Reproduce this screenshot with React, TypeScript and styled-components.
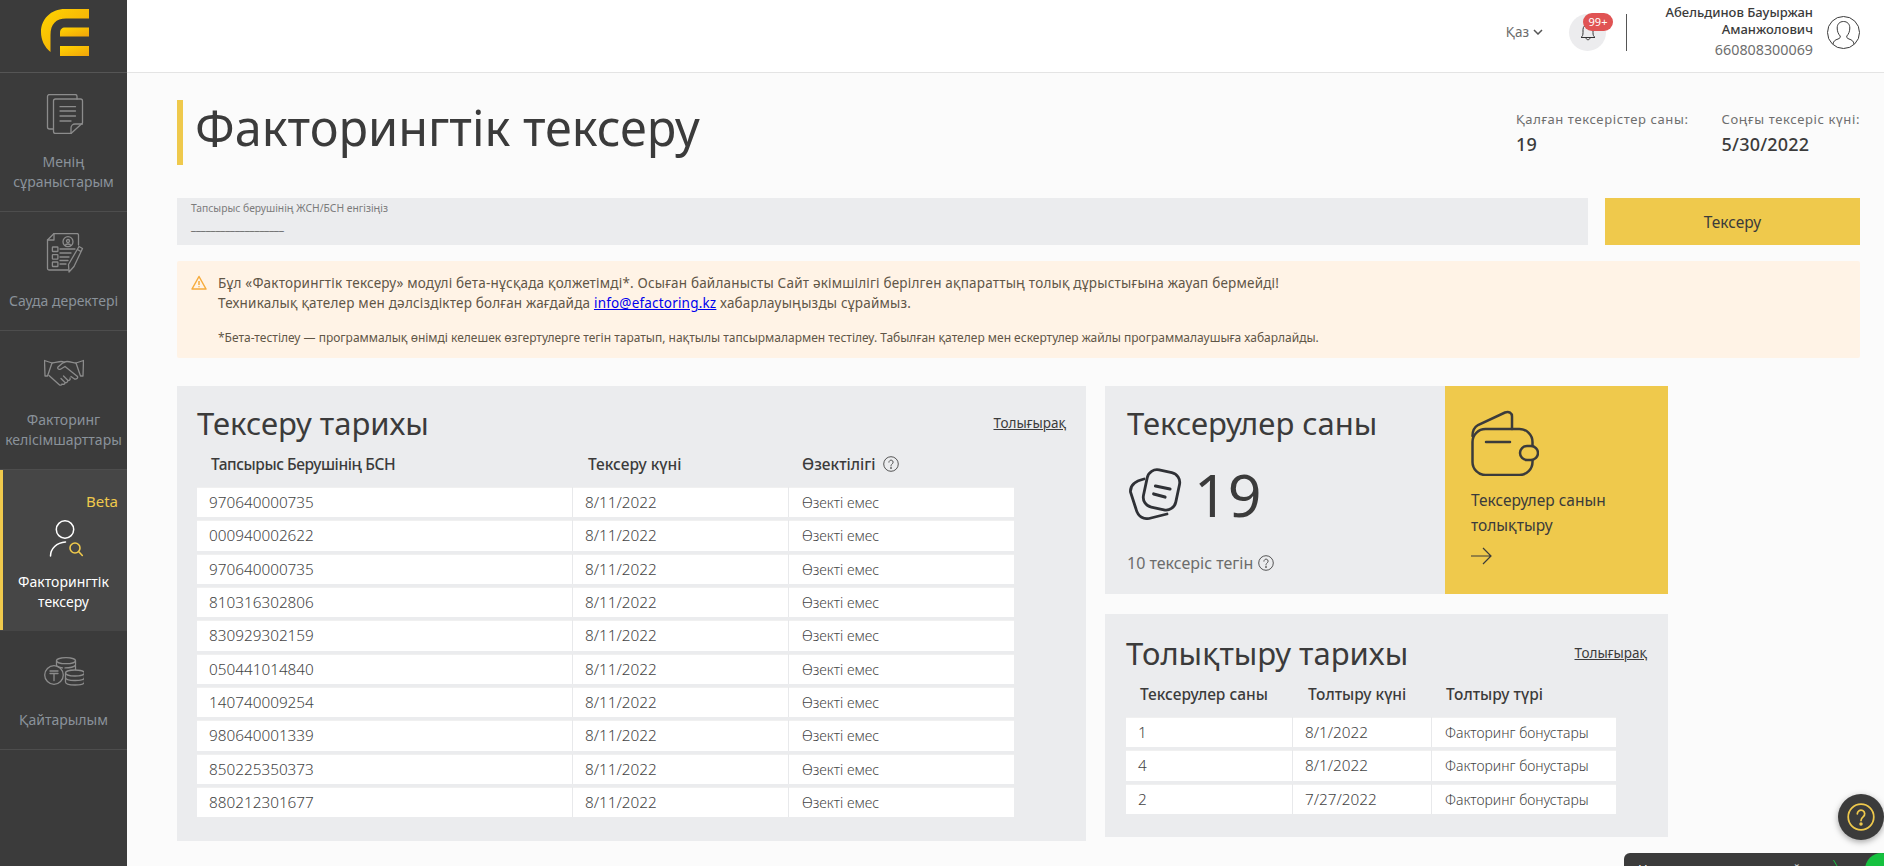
import React from "react";
import styled, { createGlobalStyle } from "styled-components";

const Global = createGlobalStyle`
  html, body {
    margin: 0;
    padding: 0;
    height: 100%;
    overflow: hidden;
    background: #fbfbfb;
  }
  * { box-sizing: border-box; }
`;

const yellow = "#efc94c";
const dark = "#3b3b3b";
const panel = "#ebecee";

const Shell = styled.div`
  display: flex;
  width: 1884px;
  height: 866px;
  overflow: hidden;
  font-family: "Noto Sans", "Open Sans", sans-serif;
  color: ${dark};
  background: #fbfbfb;
`;

const Sidebar = styled.nav`
  flex: 0 0 127px;
  background: ${dark};
  display: flex;
  flex-direction: column;
`;

const LogoBox = styled.div`
  height: 73px;
  display: flex;
  padding: 9px 0 0 41px;
  border-bottom: 1px solid #555;
`;

const NavItem = styled.a<{ $active?: boolean }>`
  position: relative;
  display: flex;
  flex-direction: column;
  align-items: center;
  padding: ${({ $active }) => ($active ? "48px 0 18px" : "21px 0 19px")};
  border-bottom: 1px solid ${({ $active }) => ($active ? "transparent" : "#4d4d4d")};
  background: ${({ $active }) => ($active ? "#464646" : "transparent")};
  box-shadow: ${({ $active }) => ($active ? `inset 3px 0 0 ${yellow}` : "none")};
  color: ${({ $active }) => ($active ? "#fff" : "#8a929a")};
  font-size: 14px;
  line-height: 20px;
  text-align: center;
`;

const NavIcon = styled.svg<{ $active?: boolean }>`
  width: 40px;
  height: 40px;
  margin-bottom: ${({ $active }) => ($active ? "14px" : "18px")};
  fill: none;
  stroke: #8c8c8c;
  stroke-width: 1.3;
  stroke-linecap: round;
  stroke-linejoin: round;
`;

const Beta = styled.span`
  position: absolute;
  top: 21px;
  right: 9px;
  color: ${yellow};
  font-size: 15px;
  line-height: 20px;
`;

const Main = styled.div`
  flex: 1;
  display: flex;
  flex-direction: column;
  min-width: 0;
`;

const TopBar = styled.header`
  height: 73px;
  background: #fff;
  border-bottom: 1px solid #e4e4e4;
  display: flex;
  align-items: center;
  justify-content: flex-end;
  padding: 0 24px 8px 0;
`;

const Lang = styled.div`
  display: flex;
  align-items: center;
  gap: 4px;
  font-size: 13.5px;
  color: #6c6c6c;
  margin-right: 26px;
`;

const Bell = styled.div`
  position: relative;
  width: 37px;
  height: 37px;
  border-radius: 50%;
  background: #ececee;
  display: flex;
  align-items: center;
  justify-content: center;
  margin-right: 20px;
`;

const BellBadge = styled.span`
  position: absolute;
  top: -1px;
  left: 14px;
  width: 30px;
  height: 18px;
  border-radius: 9px;
  background: #e05353;
  color: #fff;
  font-size: 11px;
  line-height: 18px;
  text-align: center;
`;

const Divider = styled.div`
  width: 1px;
  height: 37px;
  background: #555;
  margin-right: 21px;
`;

const UserInfo = styled.div`
  width: 165px;
  margin-right: 14px;
  text-align: right;
  font-size: 13px;
  line-height: 17px;
  font-weight: 500;
`;

const UserId = styled.div`
  font-size: 14.3px;
  font-weight: 400;
  color: #6e6e6e;
  line-height: 23px;
`;

const Content = styled.main`
  flex: 1;
  display: flex;
  flex-direction: column;
  padding: 27px 24px 0 50px;
`;

const TitleRow = styled.div`
  display: flex;
  justify-content: space-between;
  align-items: flex-start;
  height: 65px;
`;

const PageTitle = styled.h1`
  margin: 0;
  height: 65px;
  border-left: 6px solid ${yellow};
  padding-left: 12px;
  font-size: 48.6px;
  line-height: 54px;
  font-weight: 400;
  color: ${dark};
`;

const Stats = styled.div`
  display: flex;
  gap: 33px;
  padding-top: 9px;
`;

const StatLabel = styled.div`
  font-size: 13px;
  line-height: 20px;
  letter-spacing: 0.62px;
  color: #6e6e6e;
`;

const StatValue = styled.div`
  font-size: 18px;
  line-height: 26px;
  font-weight: 500;
  letter-spacing: 0.2px;
  margin-top: 2px;
`;

const SearchRow = styled.div`
  display: flex;
  gap: 17px;
  margin-top: 33px;
  height: 47px;
`;

const SearchField = styled.div`
  flex: 1;
  background: ${panel};
  padding: 4px 14px;
`;

const FieldLabel = styled.div`
  font-size: 10.3px;
  line-height: 13px;
  color: #7b7b7b;
`;

const FieldMask = styled.div`
  margin-top: 3px;
  font-size: 11px;
  line-height: 16px;
  color: #555;
`;

const CheckButton = styled.button`
  width: 255px;
  border: none;
  background: ${yellow};
  color: ${dark};
  font-family: inherit;
  font-size: 15.5px;
`;

const Notice = styled.div`
  display: flex;
  gap: 11px;
  margin-top: 16px;
  height: 97px;
  padding: 12px 14px;
  background: #fff3e6;
  border-radius: 2px;
  color: #5f5647;
`;

const NoticeIcon = styled.svg`
  flex: none;
  margin-top: 2px;
`;

const NoticeLine = styled.div`
  font-size: 13.5px;
  line-height: 20px;
  letter-spacing: 0.19px;
`;

const NoticeFoot = styled.div`
  font-size: 12px;
  line-height: 16px;
  margin-top: 17px;
`;

const NoticeLink = styled.a`
  color: #0000ee;
  text-decoration: underline;
`;

const Panels = styled.div`
  display: grid;
  grid-template-columns: 909px 563px;
  column-gap: 19px;
  margin-top: 28px;
`;

const Card = styled.section<{ $pad: string }>`
  background: ${panel};
  padding: ${({ $pad }) => $pad};
`;

const HistoryCard = styled(Card)`
  height: 455px;
`;

const SideColumn = styled.div`
  display: flex;
  flex-direction: column;
  gap: 20px;
`;

const CardHead = styled.div`
  display: flex;
  justify-content: space-between;
  align-items: center;
  height: 36px;
`;

const CardTitle = styled.h2`
  margin: 0;
  font-size: 31px;
  line-height: 36px;
  font-weight: 400;
`;

const More = styled.a`
  font-size: 13.5px;
  text-decoration: underline;
  color: ${dark};
`;

const Grid = styled.div<{ $cols: string; $width: number }>`
  display: grid;
  width: ${({ $width }) => $width}px;
  grid-template-columns: ${({ $cols }) => $cols};
  row-gap: 3px;
  margin-top: 6px;
`;

const HeadCell = styled.div<{ $indent: number; $tight?: boolean }>`
  display: flex;
  align-items: center;
  gap: 7px;
  height: 33px;
  margin-bottom: 4px;
  padding-left: ${({ $indent }) => $indent}px;
  font-size: 15.5px;
  font-weight: 500;
  letter-spacing: ${({ $tight }) => ($tight ? "-0.44px" : "0")};
  white-space: nowrap;
`;

const BodyCell = styled.div<{ $small?: boolean; $last?: boolean }>`
  height: 30.35px;
  background: #fff;
  padding: ${({ $last }) => ($last ? "1px 0 0 13px" : "1px 0 0 12px")};
  border-right: ${({ $last }) => ($last ? "none" : "1px solid #e8e9eb")};
  box-shadow: inset 0 1px 0 #f0f0f0;
  font-size: ${({ $small }) => ($small ? "14px" : "15.3px")};
  line-height: 29px;
  font-weight: 300;
  color: #444;
`;

const CountCard = styled.section`
  display: grid;
  grid-template-columns: 340px 223px;
  height: 208px;
`;

const CountInfo = styled.div`
  background: ${panel};
  padding: 19px 22px;
`;

const CountValue = styled.div`
  display: flex;
  align-items: center;
  gap: 11px;
  margin-top: 17px;
  height: 72px;
  font-size: 59px;
  line-height: 72px;
`;

const FreeNote = styled.div`
  display: flex;
  align-items: center;
  gap: 5px;
  margin-top: 22px;
  font-size: 16px;
  line-height: 22px;
  color: #6c6c6c;
`;

const TopUp = styled.div`
  background: ${yellow};
  padding: 24px 26px;
  display: flex;
  flex-direction: column;
  align-items: flex-start;
`;

const TopUpText = styled.div`
  margin-top: 12px;
  font-size: 15.5px;
  line-height: 25px;
  width: 150px;
`;

const ArrowWrap = styled.div`
  margin-top: 9px;
  height: 18px;
`;

const HelpFab = styled.div`
  position: fixed;
  left: 1838px;
  top: 794px;
  width: 46px;
  height: 46px;
  border-radius: 50%;
  background: ${dark};
  box-shadow: 0 2px 6px rgba(0, 0, 0, 0.35);
  display: flex;
  align-items: center;
  justify-content: center;
`;

const ChatTab = styled.div`
  position: fixed;
  left: 1624px;
  top: 853px;
  width: 260px;
  height: 40px;
  border-radius: 6px 0 0 0;
  background: ${dark};
  color: #fff;
  padding: 6px 14px;
  font-size: 13px;
  line-height: 20px;
  overflow: hidden;
`;

const ChatDot = styled.span`
  position: absolute;
  right: -14px;
  top: 0;
  width: 33px;
  height: 33px;
  background: #16c13f;
  border-radius: 50%;
`;

const ChatTick = styled.svg`
  position: absolute;
  left: 209px;
  top: 7px;
`;

const Help = ({ size = 16, color = "#555" }: { size?: number; color?: string }) => (
  <svg width={size} height={size} viewBox="0 0 16 16" fill="none" stroke={color} strokeWidth="1">
    <circle cx="8" cy="8" r="7.3" />
    <path d="M5.9 6.2a2.1 2.1 0 1 1 3.3 1.7C8.4 8.5 8 9 8 10" strokeLinecap="round" />
    <circle cx="8" cy="12" r="0.5" fill={color} />
  </svg>
);

const checks = [
  "970640000735",
  "000940002622",
  "970640000735",
  "810316302806",
  "830929302159",
  "050441014840",
  "140740009254",
  "980640001339",
  "850225350373",
  "880212301677",
];

const refills = [
  ["1", "8/1/2022"],
  ["4", "8/1/2022"],
  ["2", "7/27/2022"],
];

export default function App() {
  return (
    <Shell>
      <Global />
      <Sidebar>
        <LogoBox>
          <svg width="48" height="48" viewBox="0 0 48 48">
            <defs>
              <linearGradient id="lg" x1="0" y1="0" x2="1" y2="1">
                <stop offset="0" stopColor="#ffd500" />
                <stop offset="1" stopColor="#f0a30a" />
              </linearGradient>
            </defs>
            <path
              fill="url(#lg)"
              d="M48 0H24C10 0 0 10 0 23c0 8 3.500 15 9.500 20V26C9.500 15 15 9.400 25 9.400H48Z"
            />
            <path fill="url(#lg)" d="M48 18.500H24c-3 0-5 2-5 5v4h29Z" />
            <path fill="url(#lg)" d="M19 37h29v10H19Z" />
          </svg>
        </LogoBox>

        <NavItem>
          <NavIcon viewBox="0 0 40 40">
            <path d="M9.500 35H5.500a2 2 0 0 1-2-2V2.500a2 2 0 0 1 2-2H31a2 2 0 0 1 2 2V5" />
            <path d="M9.500 7a2 2 0 0 1 2-2H36.500a2 2 0 0 1 2 2V29L27 39.500H11.500a2 2 0 0 1-2-2Z" />
            <path d="M27 39.500V34a4 4 0 0 1 4-4H38.500" />
            <path d="M16 12.700h15.500M16 17h15.500M16 22h15.500M16 27h11" />
          </NavIcon>
          Менің
          <br />
          сұраныстарым
        </NavItem>

        <NavItem>
          <NavIcon viewBox="0 0 40 40">
            <path d="M34.500 12V2a1.500 1.500 0 0 0-1.500-1.500H10L3.500 7v28.500A1.500 1.500 0 0 0 5 37h19" />
            <path d="M3.500 7h6.500V.500" />
            <circle cx="24" cy="8.700" r="5" />
            <circle cx="24" cy="8" r="1.500" />
            <path d="M21.200 12.500c.5-2 5-2 5.600 0" />
            <rect x="8.400" y="14" width="5.500" height="4.500" rx=".6" />
            <rect x="8.400" y="21.700" width="5.500" height="4.500" rx=".6" />
            <rect x="8.400" y="29" width="5.500" height="4.500" rx=".6" />
            <path d="M16 16h15M16 20h11M16 24h9M16 27.500h8M16 31h6" />
            <path d="M35 13.500l3.500 2L30 33.500l-5 5.500-.5-7.500ZM33.500 16.500l3.300 2" />
          </NavIcon>
          Сауда деректері
        </NavItem>

        <NavItem>
          <NavIcon viewBox="0 0 40 40">
            <path d="M.5 8.500l7.500 2.500L3.500 24H1ZM39.500 8.500L32 11l4.500 13h2.500Z" />
            <path d="M8 11c4-.2 6-1.500 9-1.500 1.500 0 2.500.3 3.500 1" />
            <path d="M32 11c-3-.2-5.500-1.500-9-1.500-2 0-3 .5-5 2l-4 3.500c-1 1.200.5 3 2.500 2.200l4.500-2.700L33.500 24.500" />
            <path d="M5 23.500l10 9c1.500 1.300 3 .5 3-.5 1.500 1 3.200 0 3-1.500 1.500 .5 3-.5 2.700-2 1.500 .3 3-1 2.300-2.500M21 30.500l-4-4M24 28.500l-4.500-4.500M33.500 24.500c.8 1.500-1 3-3 2.500l-3.500-2.500" />
          </NavIcon>
          Факторинг
          <br />
          келісімшарттары
        </NavItem>

        <NavItem $active>
          <Beta>Beta</Beta>
          <NavIcon $active viewBox="0 0 40 40">
            <circle cx="21" cy="11.500" r="8.700" stroke="#fff" strokeWidth="1.500" />
            <path d="M6.500 38c0-7 6-13.500 15-14" stroke="#fff" strokeWidth="1.500" />
            <circle cx="31" cy="30" r="5" stroke={yellow} strokeWidth="1.600" />
            <path d="M34.800 33.800l3.500 3.700" stroke={yellow} strokeWidth="1.600" />
          </NavIcon>
          Факторингтік
          <br />
          тексеру
        </NavItem>

        <NavItem>
          <NavIcon viewBox="0 0 40 40">
            <ellipse cx="22" cy="8.700" rx="9.500" ry="3" />
            <path d="M12.500 8.700v4.500c0 1 2 2 6 2.700M31.500 8.700v9M21 15.900c4 0 8.500-.5 10.500-2.700" />
            <ellipse cx="31" cy="21" rx="9.500" ry="3" />
            <path d="M21.500 21v9c0 1.700 4 3 9.500 3s9.500-1.300 9.500-3v-9M21.500 25.500c0 1.700 4 3 9.500 3s9.500-1.300 9.500-3" />
            <circle cx="10" cy="23" r="9.300" />
            <path d="M6 19h8M6 21.500h8M10 21.500v7" />
          </NavIcon>
          Қайтарылым
        </NavItem>
      </Sidebar>

      <Main>
        <TopBar>
          <Lang>
            Қаз
            <svg width="10" height="6" viewBox="0 0 10 6" fill="none" stroke="#555" strokeWidth="1.500">
              <path d="M1 1l4 4 4-4" />
            </svg>
          </Lang>
          <Bell>
            <svg width="16" height="18" viewBox="0 0 16 18" fill="none" stroke="#333" strokeWidth="1">
              <path d="M1 14.500c1.500-1 2-2.500 2-5V6.500a5 5 0 0 1 10 0V9.500c0 2.500.5 4 2 5ZM6 14.500c0 3 4 3 4 0" />
            </svg>
            <BellBadge>99+</BellBadge>
          </Bell>
          <Divider />
          <UserInfo>
            Абельдинов Бауыржан Аманжолович
            <UserId>660808300069</UserId>
          </UserInfo>
          <svg width="33" height="33" viewBox="0 0 33 33" fill="none" stroke="#3b3b3b" strokeWidth="1">
            <circle cx="16.500" cy="16.500" r="16" />
            <path d="M6 28c.5-3 2-4 5-5 2-.7 2.500-1.500 2.200-3-2-2-3-5-3-8 0-4 2.500-6.500 6.300-6.500s6.300 2.500 6.300 6.500c0 3-1 6-3 8-.3 1.500.2 2.300 2.200 3 3 1 4.500 2 5 5" />
          </svg>
        </TopBar>

        <Content>
          <TitleRow>
            <PageTitle>Факторингтік тексеру</PageTitle>
            <Stats>
              <div>
                <StatLabel>Қалған тексерістер саны:</StatLabel>
                <StatValue>19</StatValue>
              </div>
              <div>
                <StatLabel>Соңғы тексеріс күні:</StatLabel>
                <StatValue>5/30/2022</StatValue>
              </div>
            </Stats>
          </TitleRow>

          <SearchRow>
            <SearchField>
              <FieldLabel>Тапсырыс берушінің ЖСН/БСН енгізіңіз</FieldLabel>
              <FieldMask>___________________</FieldMask>
            </SearchField>
            <CheckButton>Тексеру</CheckButton>
          </SearchRow>

          <Notice>
            <NoticeIcon width="16" height="15" viewBox="0 0 16 15" fill="none" stroke="#f6ab3c" strokeWidth="1.500">
              <path d="M8 1.500L15 14H1Z" strokeLinejoin="round" />
              <path d="M8 6v4M8 11.300v1" />
            </NoticeIcon>
            <div>
              <NoticeLine>
                Бұл «Факторингтік тексеру» модулі бета-нұсқада қолжетімді*. Осыған байланысты Сайт әкімшілігі берілген ақпараттың толық дұрыстығына жауап бермейді!
              </NoticeLine>
              <NoticeLine>
                Техникалық қателер мен дәлсіздіктер болған жағдайда <NoticeLink>info@efactoring.kz</NoticeLink> хабарлауыңызды сұраймыз.
              </NoticeLine>
              <NoticeFoot>
                *Бета-тестілеу — программалық өнімді келешек өзгертулерге тегін таратып, нақтылы тапсырмалармен тестілеу. Табылған қателер мен ескертулер жайлы программалаушыға хабарлайды.
              </NoticeFoot>
            </div>
          </Notice>

          <Panels>
            <HistoryCard $pad="19px 20px">
              <CardHead>
                <CardTitle>Тексеру тарихы</CardTitle>
                <More>Толығырақ</More>
              </CardHead>
              <Grid $cols="376px 216px 1fr" $width={817}>
                <HeadCell $indent={14} $tight>
                  Тапсырыс Берушінің БСН
                </HeadCell>
                <HeadCell $indent={15}>Тексеру күні</HeadCell>
                <HeadCell $indent={13}>
                  Өзектілігі <Help />
                </HeadCell>
                {checks.map((bin, i) => (
                  <React.Fragment key={i}>
                    <BodyCell>{bin}</BodyCell>
                    <BodyCell>8/11/2022</BodyCell>
                    <BodyCell $small $last>
                      Өзекті емес
                    </BodyCell>
                  </React.Fragment>
                ))}
              </Grid>
            </HistoryCard>

            <SideColumn>
              <CountCard>
                <CountInfo>
                  <CardTitle>Тексерулер саны</CardTitle>
                  <CountValue>
                    <svg width="56" height="52" viewBox="-2 0 56 52" fill="none" stroke="#2f3136" strokeWidth="2.800" strokeLinecap="round">
                      <rect x="16" y="3" width="33" height="38" rx="10" transform="rotate(12 33 22)" />
                      <path d="M15 11C6 13 1 17 1.500 24L7 41c2 8 8 11 15 9l16-4" />
                      <path d="M26.500 18L41 21M24.700 26L36 29" strokeWidth="3.200" />
                    </svg>
                    19
                  </CountValue>
                  <FreeNote>
                    10 тексеріс тегін <Help />
                  </FreeNote>
                </CountInfo>
                <TopUp>
                  <svg width="68" height="66" viewBox="0 0 68 66" fill="none" stroke="#3b3b3b" strokeWidth="2.500" strokeLinecap="round">
                    <rect x="1.500" y="19" width="60" height="46" rx="13" />
                    <path d="M1.500 26c0-6 2-9 5.500-11L34 2.500c4-1.500 7 .5 7 4V19M15 32h24" />
                    <rect x="49" y="36" width="18" height="14" rx="7" fill={yellow} />
                  </svg>
                  <TopUpText>Тексерулер санын толықтыру</TopUpText>
                  <ArrowWrap>
                    <svg width="21" height="18" viewBox="0 0 21 18" fill="none" stroke="#3b3b3b" strokeWidth="1.200">
                      <path d="M0 9h20M12 1l8 8-8 8" />
                    </svg>
                  </ArrowWrap>
                </TopUp>
              </CountCard>

              <Card $pad="21px 21px 23px">
                <CardHead>
                  <CardTitle>Толықтыру тарихы</CardTitle>
                  <More>Толығырақ</More>
                </CardHead>
                <Grid $cols="167px 139px 184px" $width={490}>
                  <HeadCell $indent={14}>Тексерулер саны</HeadCell>
                  <HeadCell $indent={15}>Толтыру күні</HeadCell>
                  <HeadCell $indent={14}>Толтыру түрі</HeadCell>
                  {refills.map(([n, d], i) => (
                    <React.Fragment key={i}>
                      <BodyCell>{n}</BodyCell>
                      <BodyCell>{d}</BodyCell>
                      <BodyCell $small $last>
                        Факторинг бонустары
                      </BodyCell>
                    </React.Fragment>
                  ))}
                </Grid>
              </Card>
            </SideColumn>
          </Panels>
        </Content>
      </Main>

      <HelpFab>
        <Help size={28} color={yellow} />
      </HelpFab>
      <ChatTab>
        Напишите нам, мы онлайн
        <ChatTick width="5" height="6" viewBox="0 0 5 6" fill="none" stroke="#16c13f" strokeWidth="1">
          <path d="M0.500 0l3.500 6" />
        </ChatTick>
        <ChatDot />
      </ChatTab>
    </Shell>
  );
}
